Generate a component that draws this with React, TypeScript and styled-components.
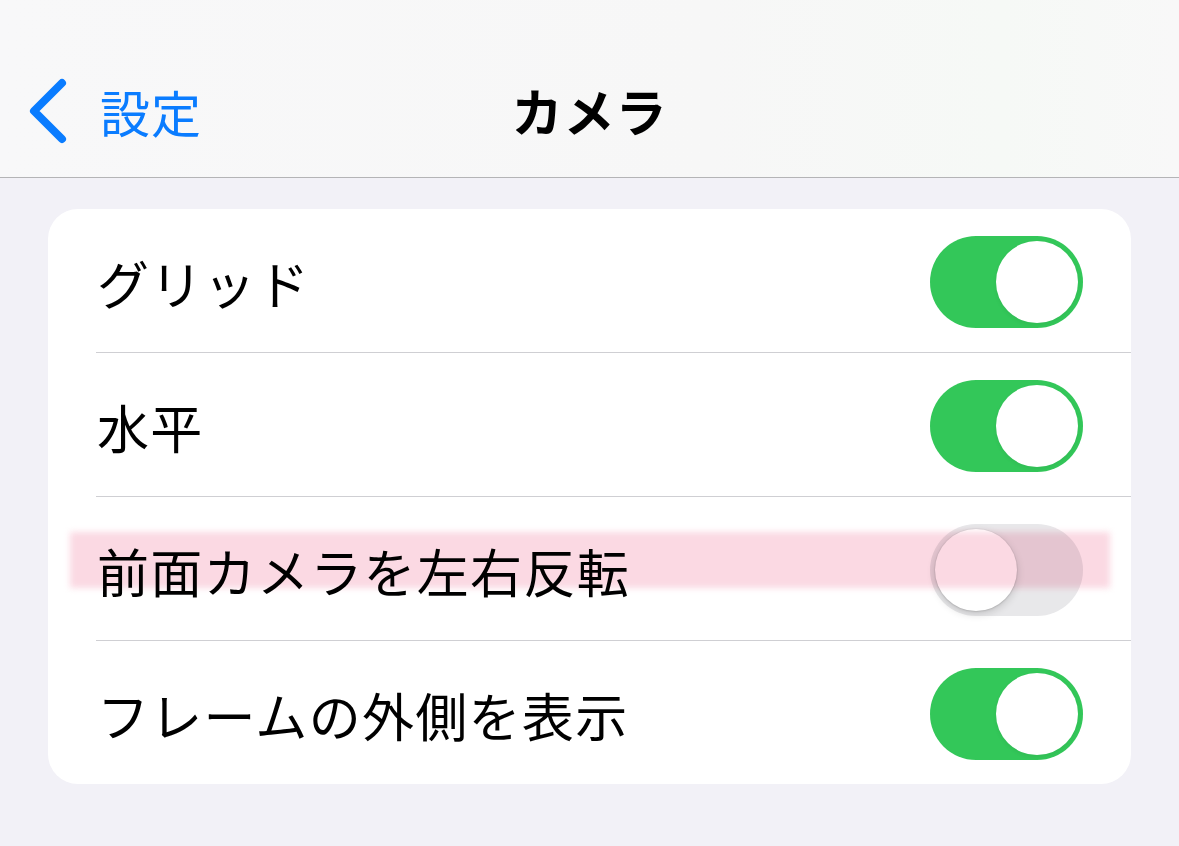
import React from "react";
import styled, { createGlobalStyle } from "styled-components";

const Global = createGlobalStyle`
  html, body { margin: 0; padding: 0; }
  body {
    width: 1179px;
    height: 846px;
    overflow: hidden;
    background: #f2f1f7;
    font-family: "Noto Sans CJK JP", "Noto Sans", sans-serif;
    -webkit-font-smoothing: antialiased;
  }
`;

const Screen = styled.div`
  width: 1179px;
  height: 846px;
  display: flex;
  flex-direction: column;
  background: #f2f1f7;
`;

const NavBar = styled.header`
  height: 177px;
  flex: none;
  display: grid;
  grid-template-columns: 1fr auto 1fr;
  align-items: center;
  background: linear-gradient(90deg, #f8f8f9 0%, #f7f7f7 60%, #f6f9f6 85%, #f8f8f8 100%);
  border-bottom: 1px solid #b4b4b6;
  box-sizing: content-box;
`;

const BackButton = styled.div`
  display: flex;
  align-items: center;
  gap: 29px;
  padding-left: 27px;
  margin-top: 44px;
  color: #0a7cff;
`;

const BackLabel = styled.span`
  font-size: 50px;
  line-height: 1;
  font-weight: 400;
  color: #0a7cff;
  letter-spacing: 1px;
`;

const Title = styled.h1`
  margin: 44px 0 0;
  font-size: 51px;
  line-height: 1;
  font-weight: 700;
  color: #000;
  letter-spacing: 1px;
`;

const Card = styled.section`
  margin: 31px 0 0 48px;
  width: 1083px;
  background: #fff;
  border-radius: 30px;
  overflow: hidden;
`;

const Row = styled.div`
  position: relative;
  padding-left: 48px;
`;

const RowInner = styled.div<{ $last?: boolean }>`
  height: 143px;
  display: flex;
  align-items: center;
  justify-content: space-between;
  padding-right: 48px;
  padding-left: 1px;
  border-bottom: ${(p) => (p.$last ? "none" : "1px solid #cfcfd3")};
`;

const Label = styled.span`
  font-size: 52px;
  line-height: 1;
  color: #000;
  margin-top: 4px;
  letter-spacing: 1.3px;
`;

const Track = styled.div<{ $on: boolean }>`
  position: relative;
  width: 153px;
  height: 92px;
  border-radius: 46px;
  margin-top: 3px;
  background: ${(p) => (p.$on ? "#33c759" : "#e8e8ea")};
  flex: none;
`;

const Knob = styled.div<{ $on: boolean }>`
  position: absolute;
  top: 5px;
  left: ${(p) => (p.$on ? "66px" : "5px")};
  width: 82px;
  height: 82px;
  border-radius: 50%;
  background: #fff;
  box-shadow: ${(p) =>
    p.$on
      ? "0 2px 4px rgba(0,0,0,0.06)"
      : "0 3px 8px rgba(0,0,0,0.16), 0 1px 2px rgba(0,0,0,0.1), 0 0 0 1px rgba(0,0,0,0.03)"};
`;

const Highlight = styled.div`
  position: absolute;
  left: 22px;
  right: 21px;
  top: 35px;
  height: 56px;
  background: #fbd9e3;
  mix-blend-mode: multiply;
  filter: blur(3px);
  pointer-events: none;
`;

const Toggle = ({ on }: { on: boolean }) => (
  <Track $on={on}>
    <Knob $on={on} />
  </Track>
);

const Chevron = () => (
  <svg width="44" height="66" viewBox="0 0 44 66" fill="none">
    <path
      d="M35 5 L7 33 L35 61"
      stroke="#0a7cff"
      strokeWidth="8"
      strokeLinecap="round"
      strokeLinejoin="round"
    />
  </svg>
);

const items = [
  { label: "グリッド", on: true },
  { label: "水平", on: true },
  { label: "前面カメラを左右反転", on: false, highlight: true },
  { label: "フレームの外側を表示", on: true },
];

export default function App() {
  return (
    <>
      <Global />
      <Screen>
        <NavBar>
          <BackButton>
            <Chevron />
            <BackLabel>設定</BackLabel>
          </BackButton>
          <Title>カメラ</Title>
          <div />
        </NavBar>
        <Card>
          {items.map((it, i) => (
            <Row key={it.label}>
              <RowInner $last={i === items.length - 1}>
                <Label>{it.label}</Label>
                <Toggle on={it.on} />
              </RowInner>
              {it.highlight && <Highlight />}
            </Row>
          ))}
        </Card>
      </Screen>
    </>
  );
}
